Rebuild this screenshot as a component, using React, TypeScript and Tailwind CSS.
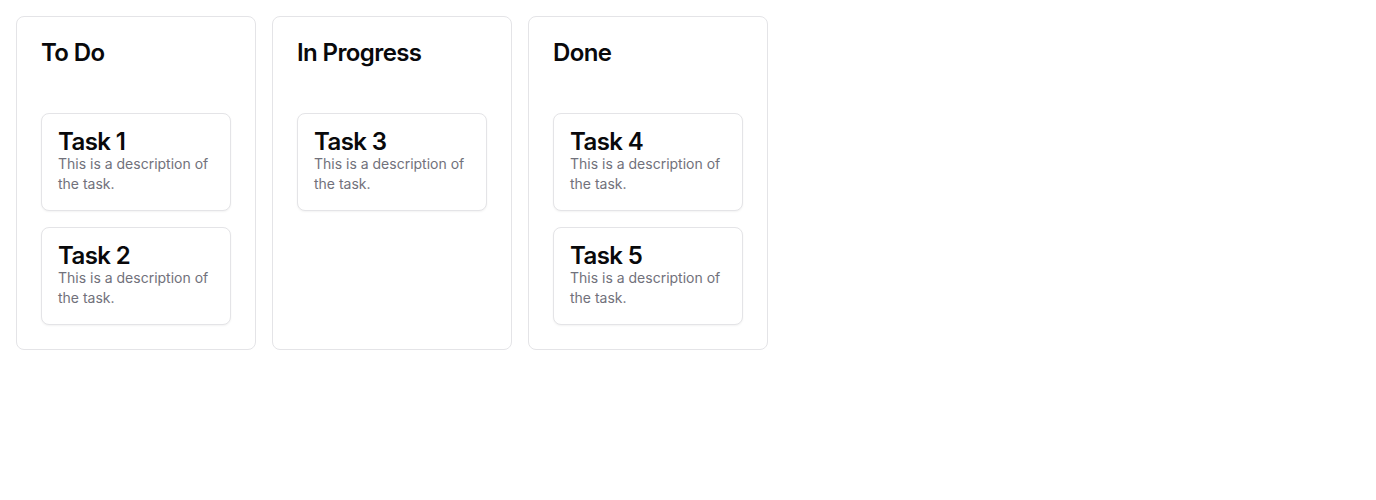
const columns = [
  { title: 'To Do', tasks: ['Task 1', 'Task 2'] },
  { title: 'In Progress', tasks: ['Task 3'] },
  { title: 'Done', tasks: ['Task 4', 'Task 5'] },
];

export default function App() {
  return (
    <div className="min-h-[500px] bg-white p-4 font-['Inter',sans-serif] text-zinc-950">
      <div className="flex gap-4">
        {columns.map(col => (
          <div key={col.title} className="w-[240px] rounded-lg border border-zinc-200 bg-white p-6">
            <h2 className="mb-12 text-2xl font-semibold leading-6 tracking-tight">{col.title}</h2>
            <div className="flex flex-col gap-4">
              {col.tasks.map(task => (
                <div key={task} className="rounded-lg border border-zinc-200 bg-white p-4 shadow-xs">
                  <h3 className="text-2xl font-semibold leading-6 tracking-tight">{task}</h3>
                  <p className="text-sm text-zinc-500">This is a description of the task.</p>
                </div>
              ))}
            </div>
          </div>
        ))}
      </div>
    </div>
  );
}
